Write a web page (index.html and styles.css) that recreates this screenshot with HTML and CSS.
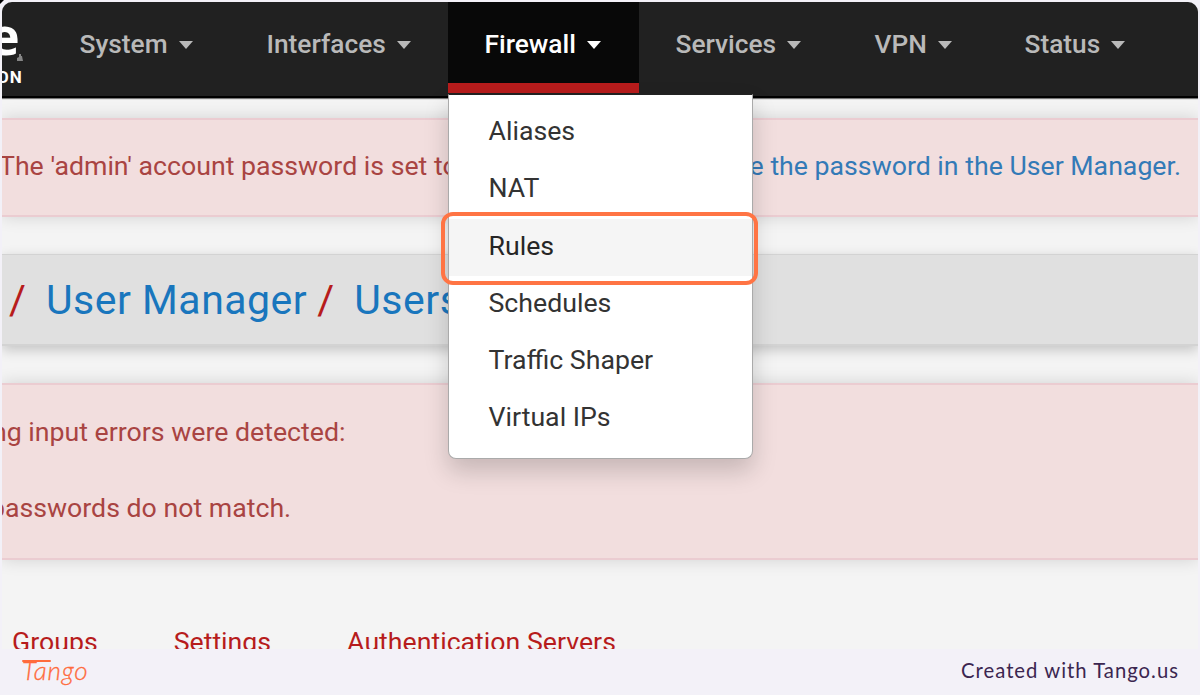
FILE: index.html
```html
<!DOCTYPE html>
<html lang="en">
<head>
<meta charset="utf-8">
<title>User Manager</title>
<link rel="stylesheet" href="styles.css">
</head>
<body>
<div class="corner"></div>
<main class="screen">
  <nav class="navbar">
    <div class="brand"><span class="brand-name">e<svg class="mark" viewBox="0 0 6 7"><path d="M2 0h2v2h1l1 5H0V4l2-1z"/></svg></span><span class="edition">ON</span></div>
    <a class="nav-item"><span>System</span><i class="caret"></i></a>
    <a class="nav-item"><span>Interfaces</span><i class="caret"></i></a>
    <div class="nav-item active"><span>Firewall</span><i class="caret"></i>
      <ul class="menu">
        <li>Aliases</li>
        <li>NAT</li>
        <li class="hover">Rules</li>
        <li>Schedules</li>
        <li>Traffic Shaper</li>
        <li>Virtual IPs</li>
      </ul>
      <div class="highlight"></div>
    </div>
    <a class="nav-item"><span>Services</span><i class="caret"></i></a>
    <a class="nav-item"><span>VPN</span><i class="caret"></i></a>
    <a class="nav-item"><span>Status</span><i class="caret"></i></a>
  </nav>
  <section class="alert warning"><span>The 'admin' account password is set to</span><a class="link">e the password in the User Manager.</a></section>
  <header class="crumbs"><b>/</b><a>User Manager</a><b>/</b><a>Users</a></header>
  <section class="alert errors">
    <p class="line-a">ng input errors were detected:</p>
    <p class="line-b">passwords do not match.</p>
  </section>
  <div class="tabs"><a>Groups</a><a>Settings</a><a>Authentication Servers</a></div>
</main>
<footer class="footer"><span class="logo">Tango</span><span class="credit">Created with Tango.us</span></footer>
</body>
</html>
```
FILE: styles.css
```css
* { box-sizing: border-box; }
body { margin: 0; padding: 2px 2px 0; width: 1200px; height: 695px; overflow: hidden; background: #f3f1f8; font-family: Roboto, sans-serif; font-size: 26.7px; position: relative; }
.corner { position: absolute; left: 0; top: 0; width: 4px; height: 4px; background: #000; clip-path: polygon(0 0, 100% 0, 0 100%); }
.screen { height: 647px; background: #f4f4f4; border-radius: 10px 10px 0 0; overflow: hidden; display: flex; flex-direction: column; }
.navbar { flex: none; height: 96px; background: #212121; border-bottom: 2px solid #000; box-shadow: 0 1px 1px #777; display: grid; grid-template-columns: 41px 187px 218px 191px 199px 150px 177px; position: relative; z-index: 2; }
.brand { display: flex; flex-direction: column; color: #fff; font-family: "Open Sans", sans-serif; font-weight: 700; overflow: hidden; }
.brand-name { font-size: 52px; line-height: 65px; height: 65px; margin-left: -13px; letter-spacing: 0; display: flex; align-items: flex-end; }
.mark { width: 6px; height: 7px; fill: #858585; margin: 0 0 6px -3px; }
.edition { font: 700 17px/20px Roboto, sans-serif; letter-spacing: 1px; margin-left: -5px; }
.nav-item { display: flex; gap: 11px; padding: 27px 0 0 36.5px; height: 94px; line-height: 30px; font-size: 26.3px; font-weight: 500; color: #b9b9b9; position: relative; white-space: nowrap; }
.caret { width: 0; height: 0; border: 7.5px solid transparent; border-top: 8px solid currentColor; border-bottom: 0; margin-top: 12px; }
.active { color: #fff; background: #080808; height: 91px; border-bottom: 10px solid #b71c1c; }
.menu { position: absolute; left: 0; top: 92px; width: 305px; height: 365px; margin: 0; padding: 9px 0; list-style: none; background: #fff; border: 1px solid #aaa; border-top-color: #222; border-radius: 0 0 8px 8px; box-shadow: 0 12px 24px rgba(0,0,0,.18); color: #333; font-size: 26.7px; font-weight: 400; }
.menu li { height: 57.3px; line-height: 55px; padding-left: 39.5px; }
.menu .hover { background: #f5f5f5; color: #262626; }
.highlight { position: absolute; left: -7px; top: 210px; width: 317px; height: 73px; border: 4px solid #ff7444; border-radius: 12px; }
.alert { flex: none; background: #f2dede; border: solid #ebccd1; border-width: 2px 0; box-shadow: 0 0 16px rgba(0,0,0,.14); color: #a94442; white-space: nowrap; }
.warning { display: flex; justify-content: space-between; height: 99px; margin-top: 20px; padding: 30px 17px 0 0; line-height: 32px; }
.warning span { margin-left: -3px; }
.link { color: #337ab7; }
.crumbs { flex: none; height: 92px; margin: 37px 0; background: #e0e0e0; border: solid #d3d3d3; border-width: 1px 0 2px; box-shadow: 0 4px 12px rgba(0,0,0,.2); display: flex; padding: 20px 0 0 7px; font-size: 41px; line-height: 50px; letter-spacing: .5px; color: #1976bd; white-space: nowrap; }
.crumbs b { color: #b71c1c; font-weight: 400; width: 37px; }
.crumbs a { margin-right: 10px; }
.errors { height: 177px; padding-top: 31px; }
.errors p { margin: 0; line-height: 32px; }
.errors .line-a { margin-left: -10px; }
.errors .line-b { margin: 44px 0 0 -12px; }
.tabs { display: flex; gap: 76px; margin-top: 66px; padding-left: 10px; line-height: 32px; color: #b71c1c; white-space: nowrap; }
.footer { display: flex; justify-content: space-between; height: 46px; padding: 0 19px 0 20px; }
.logo { position: relative; font: italic 300 26px/42px Lato, sans-serif; letter-spacing: .8px; color: #ff6b3d; -webkit-text-stroke: .3px #ff6b3d; }
.logo::after { content: ""; position: absolute; left: 0; top: 11px; width: 29px; height: 2px; background: #ff6b3d; border-radius: 1px; }
.credit { font: 400 20.3px/43px Lato, sans-serif; letter-spacing: 1px; color: #3b2650; }
```
